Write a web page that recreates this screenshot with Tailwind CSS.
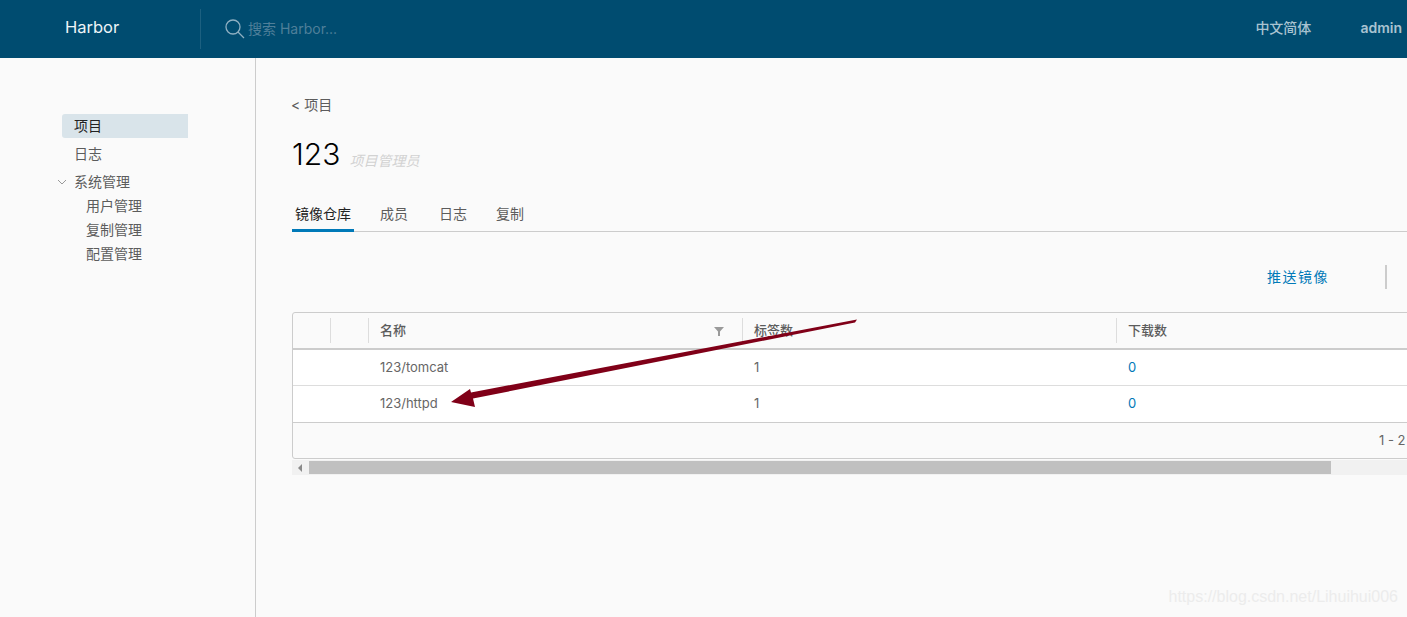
<!DOCTYPE html>
<html lang="zh-CN">
<head>
    <meta charset="UTF-8">
    <title>Harbor</title>
    <script src="https://cdn.jsdelivr.net/npm/@tailwindcss/browser@4"></script>
</head>
<body class="relative h-[617px] w-[1407px] overflow-hidden bg-[#fafafa] font-['Inter','Noto_Sans_CJK_SC',sans-serif] text-[#5c5c5c]">
    <!-- Top bar -->
    <header class="flex h-[58px] items-center bg-[#004c70]">
        <div class="mb-[3px] w-[200px] pl-[65px] text-[16.5px] leading-none text-[#eef4f7]">Harbor</div>
        <div class="flex h-10 flex-1 items-center border-l border-[#1c6080] pl-6">
            <svg class="h-[20px] w-[20px]" viewBox="0 0 20 20" fill="none" stroke="#8fb0c2" stroke-width="1.3">
                <circle cx="8" cy="8" r="7"></circle>
                <path d="M13 13l6 6"></path>
            </svg>
            <span class="ml-[3px] text-sm text-[#4f7f99]">搜索 Harbor...</span>
        </div>
        <div class="mb-[2px] flex items-center pr-[5px] text-sm font-medium text-[#a9c3d1]">
            <span>中文简体</span>
            <span class="ml-[49px] font-semibold">admin</span>
        </div>
    </header>

    <div class="flex h-[559px]">
        <!-- Side nav -->
        <nav class="w-[256px] shrink-0 border-r border-[#ccc] pt-[56px] pl-[62px] text-sm">
            <a class="flex h-6 w-[126px] items-center rounded-l-[3px] bg-[#d9e4ea] pl-3 text-[#222]">项目</a>
            <a class="mt-1 flex h-6 items-center pl-3">日志</a>
            <div class="mt-1 flex h-6 items-center">
                <svg class="mr-[6px] -ml-[6px] h-3 w-3" viewBox="0 0 12 12" fill="none" stroke="#999" stroke-width="1"><path d="M2 4l4 4 4-4"></path></svg>
                <span>系统管理</span>
            </div>
            <div class="pl-6">
                <a class="flex h-6 items-center">用户管理</a>
                <a class="flex h-6 items-center">复制管理</a>
                <a class="flex h-6 items-center">配置管理</a>
            </div>
        </nav>

        <!-- Content -->
        <main class="min-w-0 flex-1 overflow-hidden pt-[37px] pl-9">
            <div class="-ml-[1px] text-sm leading-[20px]">&lt; 项目</div>
            <div class="mt-[17px] flex items-end">
                <span class="text-[30px] leading-[44px] font-light text-black">123</span>
                <span class="mb-[5px] ml-[9px] text-sm text-[#d2d2d2] italic">项目管理员</span>
            </div>
            <div class="mt-[26px] flex h-[30px] border-b border-[#ccc] text-sm">
                <span class="h-[30px] w-[62px] border-b-[3px] border-[#0079b8] pl-[3px] leading-[24px] text-[#222]">镜像仓库</span>
                <span class="ml-[26px] leading-[24px]">成员</span>
                <span class="ml-[31px] leading-[24px]">日志</span>
                <span class="ml-[29px] leading-[24px]">复制</span>
            </div>
            <div class="flex h-[80px] items-center pt-[10px]">
                <span class="ml-[975px] text-sm tracking-[1.5px] text-[#0079b8]">推送镜像</span>
                <span class="ml-[56px] h-6 w-[2px] bg-[#ccc]"></span>
            </div>

            <!-- Repository table -->
            <div class="w-[1300px] rounded-[3px] border border-[#ccc] text-[13px]">
                <div class="flex h-[35px] items-center">
                    <span class="h-[25px] w-[38px] border-r border-[#ddd]"></span>
                    <span class="h-[25px] w-[38px] border-r border-[#ddd]"></span>
                    <span class="flex h-[25px] w-[374px] items-center justify-between border-r border-[#ddd] pr-[18px] pl-[11px] font-medium">
                        名称
                        <svg class="h-[10px] w-[10px]" viewBox="0 0 10 10" fill="#9a9a9a"><path d="M0 1h10L6 5.5V10H4V5.500z"></path></svg>
                    </span>
                    <span class="flex h-[25px] w-[374px] items-center border-r border-[#ddd] pl-[11px] font-medium">标签数</span>
                    <span class="flex h-[25px] items-center pl-[11px] font-medium">下载数</span>
                </div>
                <div class="flex h-[37px] items-center border-t-2 border-[#ccc] bg-white pl-[87px] text-[#666]">
                    <span class="w-[374px]">123/tomcat</span>
                    <span class="w-[374px]">1</span>
                    <span class="text-[#0079b8]">0</span>
                </div>
                <div class="flex h-[37px] items-center border-t border-[#ddd] bg-white pl-[87px] text-[#666]">
                    <span class="w-[374px]">123/httpd</span>
                    <span class="w-[374px]">1</span>
                    <span class="text-[#0079b8]">0</span>
                </div>
                <div class="flex h-[36px] items-center border-t border-[#ccc] pl-[1086px] text-[#666]">1 - 2 共计 2 条记录</div>
            </div>

            <!-- Horizontal scrollbar -->
            <div class="mt-[1px] flex h-[15px] items-center bg-[#f1f1f1]">
                <svg class="ml-[5px] h-2 w-[6px]" viewBox="0 0 6 8" fill="#8a8a8a"><path d="M5 0v8L1 4z"></path></svg>
                <div class="ml-[6px] h-[13px] w-[1022px] bg-[#c0c0c0]"></div>
            </div>
        </main>
    </div>

    <!-- Annotation arrow drawn over the screenshot -->
    <svg class="absolute top-0 left-0 h-[617px] w-[1407px]" viewBox="0 0 1407 617" fill="#800018">
        <path d="M857 319.500L855 322.500 473 398.500 475 407 451 402 470 389 471 392.500z"></path>
    </svg>

    <div class="absolute right-[9px] bottom-[8px] font-['Liberation_Sans',sans-serif] text-base text-[#ececec]">https://blog.csdn.net/Lihuihui006</div>
</body>
</html>
